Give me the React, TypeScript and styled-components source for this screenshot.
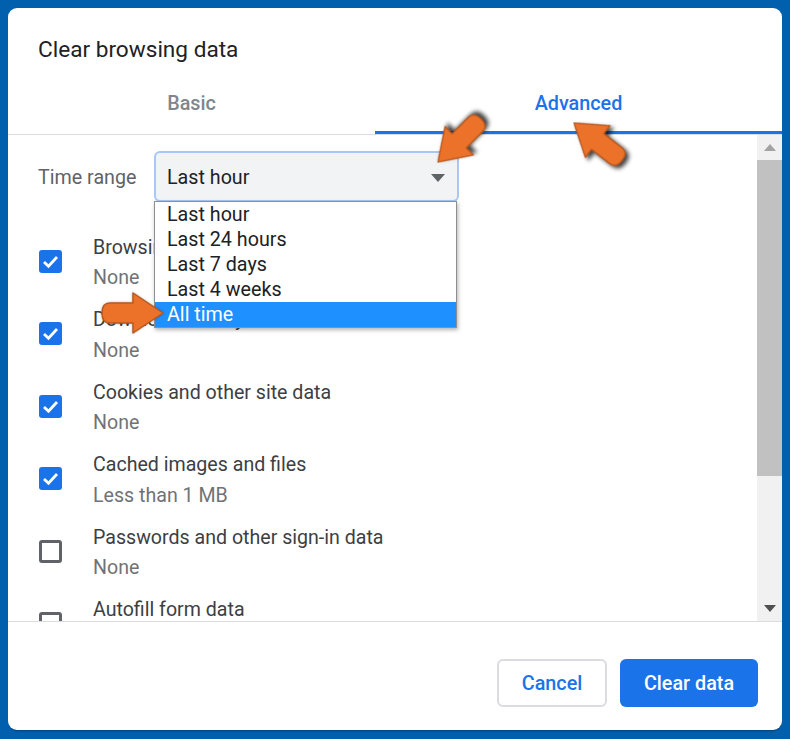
import styled, { createGlobalStyle } from "styled-components";

const GlobalStyle = createGlobalStyle`
    html, body {
        margin: 0;
        height: 100%;
        background: #0060ae;
        font-family: Roboto, "Liberation Sans", sans-serif;
    }
`;

const Page = styled.div`
    position: relative;
    width: 790px;
    height: 739px;
    padding: 8px 8px 9px;
    box-sizing: border-box;
    overflow: hidden;
`;

const Dialog = styled.main`
    height: 100%;
    display: flex;
    flex-direction: column;
    background: #fff;
    border-radius: 9px;
    box-shadow: 0 3px 2px -2px rgba(10, 30, 60, 0.5);
`;

const Title = styled.h1`
    margin: 0;
    height: 63px;
    padding: 28px 0 0 30px;
    box-sizing: border-box;
    font-size: 22.6px;
    line-height: 28px;
    font-weight: 400;
    color: #202124;
`;

const Tabs = styled.div`
    flex: none;
    display: grid;
    grid-template-columns: 367px 1fr;
    height: 64px;
    box-sizing: border-box;
    border-bottom: 1px solid #dadce0;
`;

const Tab = styled.div<{ $active?: boolean }>`
    display: flex;
    align-items: flex-start;
    justify-content: center;
    padding-top: 21px;
    box-sizing: border-box;
    font-size: 19.8px;
    line-height: 24px;
    font-weight: 500;
    color: ${(props) => (props.$active ? "#1a73e8" : "#80868b")};
    border-bottom: 3px solid ${(props) => (props.$active ? "#1a73e8" : "transparent")};
`;

const Body = styled.div`
    flex: none;
    height: 487px;
    box-sizing: border-box;
    display: flex;
    border-bottom: 1px solid #dadce0;
`;

const Scroller = styled.div`
    position: relative;
    flex: 1;
    min-width: 0;
    overflow: hidden;
`;

const RangeRow = styled.div`
    display: flex;
    align-items: center;
    height: 90.5px;
    padding: 0 0 7px 30px;
    box-sizing: border-box;
`;

const RangeLabel = styled.span`
    width: 116px;
    padding-top: 2px;
    font-size: 19.7px;
    color: #5f6368;
`;

const Select = styled.div`
    width: 305px;
    height: 51px;
    display: flex;
    align-items: center;
    justify-content: space-between;
    padding: 2px 12px 0 11px;
    box-sizing: border-box;
    background: #f1f3f4;
    border: 2px solid #a8c7f6;
    border-radius: 6px;
    font-size: 19.7px;
    color: #202124;
`;

const Caret = styled.span`
    width: 0;
    height: 0;
    border-left: 7.5px solid transparent;
    border-right: 7.5px solid transparent;
    border-top: 8px solid #5f6368;
`;

const Menu = styled.ul`
    position: absolute;
    left: 146px;
    top: 66px;
    width: 303px;
    margin: 0;
    padding: 0;
    list-style: none;
    box-sizing: border-box;
    background: #fff;
    border: 1px solid #8d8f92;
    box-shadow: 1px 2px 4px rgba(0, 0, 0, 0.3);
`;

const MenuItem = styled.li<{ $selected?: boolean }>`
    height: 25px;
    padding-left: 12px;
    font-size: 19.7px;
    line-height: 25px;
    color: ${(props) => (props.$selected ? "#fff" : "#202124")};
    background: ${(props) => (props.$selected ? "#1e90ff" : "transparent")};
`;

const Row = styled.div`
    display: flex;
    align-items: center;
    height: 72.5px;
    padding-left: 31px;
    gap: 31px;
`;

const CheckBox = styled.span<{ $checked?: boolean }>`
    flex: none;
    width: 23px;
    height: 23px;
    margin-top: -1px;
    box-sizing: border-box;
    display: flex;
    align-items: center;
    justify-content: center;
    border-radius: 3px;
    background: ${(props) => (props.$checked ? "#1a73e8" : "#fff")};
    border: ${(props) => (props.$checked ? "none" : "3px solid #5f6368")};
`;

const RowText = styled.div`
    display: flex;
    flex-direction: column;
    gap: 5.5px;
    padding-top: 1px;
`;

const RowLabel = styled.span`
    font-size: 19.6px;
    line-height: 25px;
    color: #3c4043;
    white-space: nowrap;
`;

const RowSub = styled.span`
    font-size: 19.6px;
    line-height: 25px;
    color: #6f7377;
    white-space: nowrap;
`;

const ScrollTrack = styled.div`
    flex: none;
    width: 25px;
    display: flex;
    flex-direction: column;
    align-items: stretch;
    background: #f1f1f1;
`;

const ScrollButton = styled.div`
    flex: none;
    height: 25px;
    display: flex;
    align-items: center;
    justify-content: center;
`;

const ScrollUp = styled.span`
    width: 0;
    height: 0;
    border-left: 6.5px solid transparent;
    border-right: 6.5px solid transparent;
    border-bottom: 7px solid #a3a3a3;
`;

const ScrollDown = styled.span`
    width: 0;
    height: 0;
    border-left: 6.5px solid transparent;
    border-right: 6.5px solid transparent;
    border-top: 7px solid #505050;
`;

const ScrollRail = styled.div`
    flex: 1;
`;

const ScrollThumb = styled.div`
    height: 316px;
    background: #c1c1c1;
`;

const Footer = styled.footer`
    flex: 1;
    display: flex;
    align-items: flex-start;
    justify-content: flex-end;
    gap: 13px;
    padding: 37px 24px 0 0;
`;

const Button = styled.button<{ $primary?: boolean }>`
    height: 48px;
    width: ${(props) => (props.$primary ? "138px" : "110px")};
    padding: 0;
    font-family: inherit;
    font-size: 19.8px;
    font-weight: 500;
    border-radius: 6px;
    border: ${(props) => (props.$primary ? "none" : "2px solid #dadce0")};
    background: ${(props) => (props.$primary ? "#1a73e8" : "#fff")};
    color: ${(props) => (props.$primary ? "#fff" : "#1a73e8")};
`;

const Arrow = styled.svg<{ $x: number; $y: number; $angle: number; $shadow?: boolean }>`
    position: absolute;
    left: ${(props) => props.$x - 70}px;
    top: ${(props) => props.$y - 70}px;
    width: 140px;
    height: 140px;
    transform: rotate(${(props) => props.$angle}deg);
    filter: ${(props) =>
        props.$shadow
            ? "drop-shadow(-4px 0 2px rgba(0, 0, 0, 0.75))"
            : "drop-shadow(0 0 1px rgba(0, 0, 0, 0.3))"};
    pointer-events: none;
`;

function PointerArrow(props: { x: number; y: number; angle: number; shadow?: boolean }) {
    return (
        <Arrow $x={props.x} $y={props.y} $angle={props.angle} $shadow={props.shadow} viewBox="-70 -70 140 140">
            <path
                d="M0 0 L-30 -20 L-30 -10 L-53 -10 Q-61 -10 -61 0 Q-61 10 -53 10 L-30 10 L-30 20 Z"
                fill="#ec722a"
                stroke="#b9591f"
                strokeWidth="1.5"
                strokeLinejoin="round"
            />
        </Arrow>
    );
}

function Check() {
    return (
        <svg width="17" height="17" viewBox="0 0 17 17">
            <path d="M2 9 L6.5 13.2 L15 4" fill="none" stroke="#fff" strokeWidth="2.8" />
        </svg>
    );
}

const rows = [
    { label: "Browsing history", sub: "None", checked: true },
    { label: "Download history", sub: "None", checked: true },
    { label: "Cookies and other site data", sub: "None", checked: true },
    { label: "Cached images and files", sub: "Less than 1 MB", checked: true },
    { label: "Passwords and other sign-in data", sub: "None", checked: false },
    { label: "Autofill form data", sub: "None", checked: false },
];

const ranges = ["Last hour", "Last 24 hours", "Last 7 days", "Last 4 weeks", "All time"];

export default function App() {
    return (
        <Page>
            <GlobalStyle />
            <Dialog>
                <Title>Clear browsing data</Title>
                <Tabs>
                    <Tab>Basic</Tab>
                    <Tab $active>Advanced</Tab>
                </Tabs>
                <Body>
                    <Scroller>
                        <RangeRow>
                            <RangeLabel>Time range</RangeLabel>
                            <Select>
                                Last hour
                                <Caret />
                            </Select>
                        </RangeRow>
                        <Menu>
                            {ranges.map((range) => (
                                <MenuItem key={range} $selected={range === "All time"}>
                                    {range}
                                </MenuItem>
                            ))}
                        </Menu>
                        {rows.map((row) => (
                            <Row key={row.label}>
                                <CheckBox $checked={row.checked}>{row.checked && <Check />}</CheckBox>
                                <RowText>
                                    <RowLabel>{row.label}</RowLabel>
                                    <RowSub>{row.sub}</RowSub>
                                </RowText>
                            </Row>
                        ))}
                    </Scroller>
                    <ScrollTrack>
                        <ScrollButton>
                            <ScrollUp />
                        </ScrollButton>
                        <ScrollRail>
                            <ScrollThumb />
                        </ScrollRail>
                        <ScrollButton>
                            <ScrollDown />
                        </ScrollButton>
                    </ScrollTrack>
                </Body>
                <Footer>
                    <Button>Cancel</Button>
                    <Button $primary>Clear data</Button>
                </Footer>
            </Dialog>
            <PointerArrow x={438} y={162} angle={135} shadow />
            <PointerArrow x={574} y={123} angle={218} shadow />
            <PointerArrow x={163} y={313} angle={0} />
        </Page>
    );
}
